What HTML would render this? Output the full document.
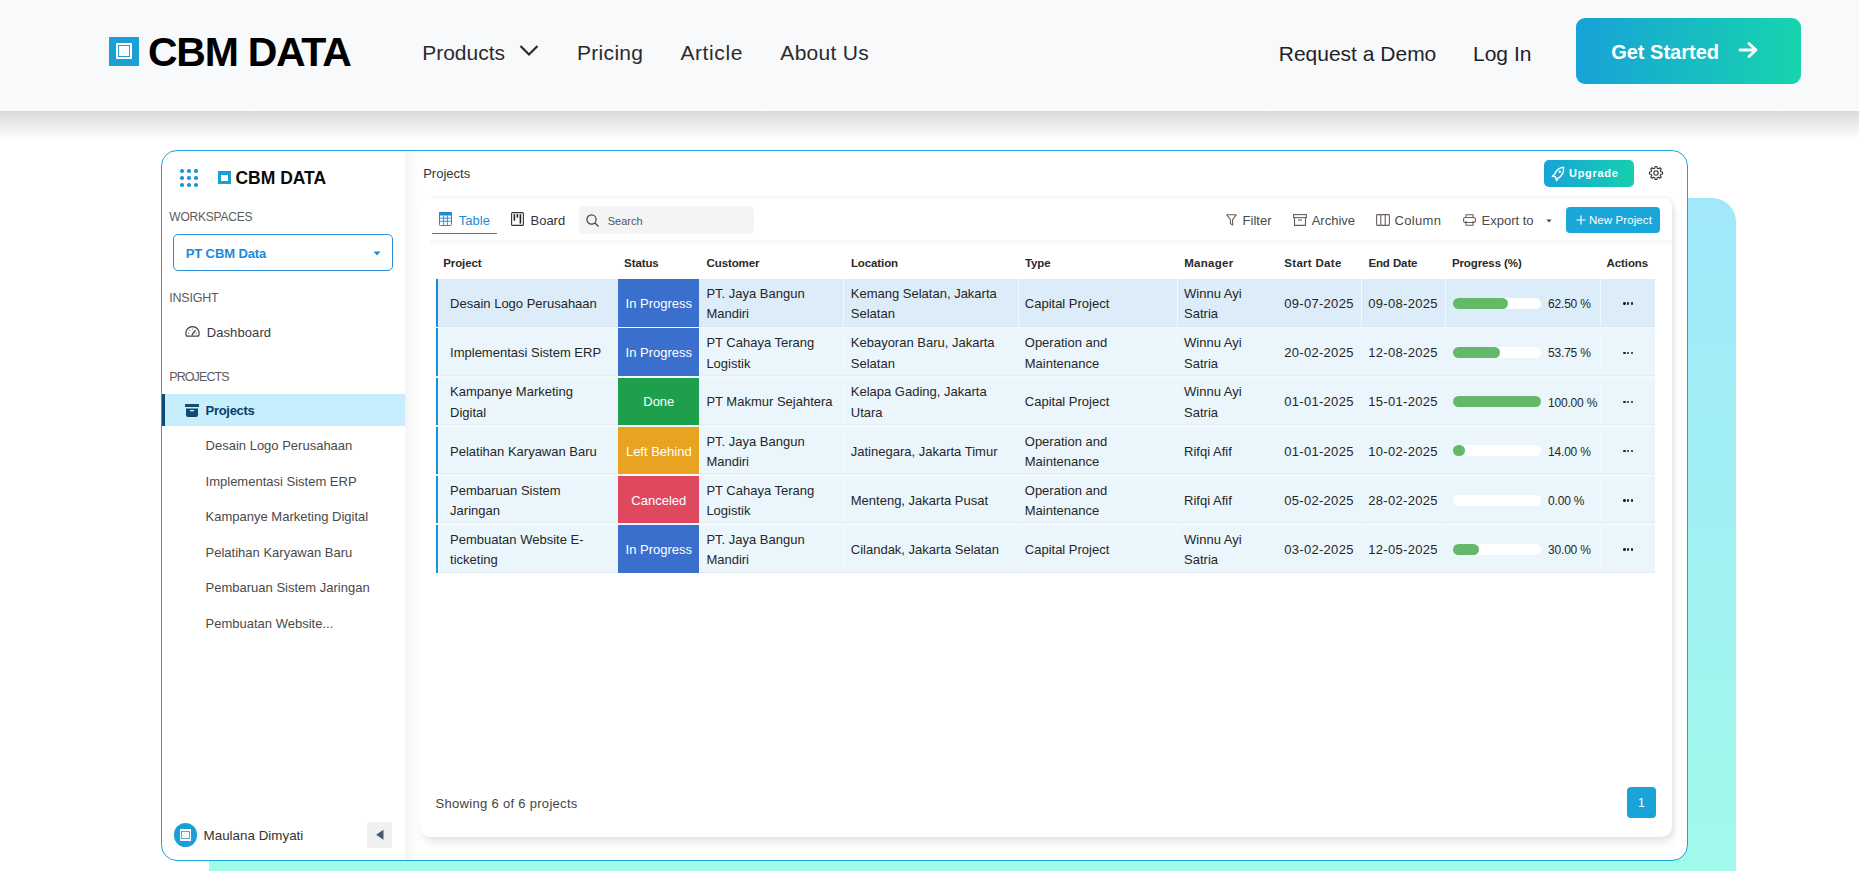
<!DOCTYPE html>
<html><head><meta charset="utf-8"><title>CBM DATA</title>
<style>
html,body{margin:0;padding:0;width:1859px;height:871px;overflow:hidden;background:#fff;}
body{position:relative;font-family:"Liberation Sans",sans-serif;}
.t{position:absolute;white-space:nowrap;}
.r{position:absolute;}
</style></head><body>
<div class="r" style="left:0px;top:0px;width:1859.00px;height:110.70px;background:#f8f9fa;"></div>
<div class="r" style="left:0px;top:110.7px;width:1859.00px;height:29.30px;background:linear-gradient(#dadada,rgba(255,255,255,0));"></div>
<div class="r" style="left:109px;top:36.5px;width:30.00px;height:29.50px;background:#1ba0d6;"></div>
<div class="r" style="left:116px;top:43px;width:16.00px;height:16.00px;background:#fff;"></div>
<div class="r" style="left:118px;top:45px;width:12.00px;height:12.00px;border:1px solid #1ba0d6;box-sizing:border-box;"></div>
<div class="t " style="left:147.95px;top:31.89px;font-size:41px;line-height:41px;font-weight:700;color:#000;letter-spacing:-1.25px;">CBM DATA</div>
<div class="t " style="left:422.13px;top:42.22px;font-size:21px;line-height:21px;font-weight:400;color:#2b2b2b;">Products</div>
<svg class="r" style="left:519px;top:44px" width="20" height="13" viewBox="0 0 20 13"><path d="M1.5 2 L10 10.5 L18.5 2" fill="none" stroke="#2b2b2b" stroke-width="2.2"/></svg>
<div class="t " style="left:577.03px;top:42.22px;font-size:21px;line-height:21px;font-weight:400;color:#2b2b2b;letter-spacing:0.3px;">Pricing</div>
<div class="t " style="left:680.43px;top:42.22px;font-size:21px;line-height:21px;font-weight:400;color:#2b2b2b;letter-spacing:0.6px;">Article</div>
<div class="t " style="left:780.33px;top:42.22px;font-size:21px;line-height:21px;font-weight:400;color:#2b2b2b;letter-spacing:0.3px;">About Us</div>
<div class="t " style="left:1278.73px;top:43.42px;font-size:21px;line-height:21px;font-weight:400;color:#1f2328;">Request a Demo</div>
<div class="t " style="left:1473.03px;top:43.42px;font-size:21px;line-height:21px;font-weight:400;color:#1f2328;">Log In</div>
<div class="r" style="left:1576px;top:18px;width:225.00px;height:65.70px;background:linear-gradient(90deg,#17a2d8,#17d4ae);border-radius:9px;"></div>
<div class="t " style="left:1611.20px;top:42.27px;font-size:20px;line-height:20px;font-weight:700;color:#fff;">Get Started</div>
<svg class="r" style="left:1738px;top:41px" width="22" height="18" viewBox="0 0 22 18"><path d="M2 9 H18 M11 2.5 L18 9 L11 15.5" fill="none" stroke="#fff" stroke-width="2.8" stroke-linecap="round" stroke-linejoin="round"/></svg>
<div class="r" style="left:208.5px;top:198px;width:1527.50px;height:702.00px;background:linear-gradient(#a1e8fc,#a0fbe9);border-radius:24px;"></div>
<div class="r" style="left:161px;top:150px;width:1527.00px;height:711.00px;background:#fff;border:1px solid #1aa3d6;border-radius:16px;box-sizing:border-box;overflow:hidden;"></div>
<div class="r" style="left:405px;top:151px;width:14.00px;height:709.00px;background:linear-gradient(90deg,#f4f4f4,rgba(255,255,255,0));"></div>
<div class="r" style="left:179.80px;top:168.70px;width:4.6px;height:4.6px;border-radius:1.8px;background:#1a95dc"></div>
<div class="r" style="left:179.80px;top:175.60px;width:4.6px;height:4.6px;border-radius:1.8px;background:#1a95dc"></div>
<div class="r" style="left:179.80px;top:182.50px;width:4.6px;height:4.6px;border-radius:1.8px;background:#1a95dc"></div>
<div class="r" style="left:186.70px;top:168.70px;width:4.6px;height:4.6px;border-radius:1.8px;background:#1a95dc"></div>
<div class="r" style="left:186.70px;top:175.60px;width:4.6px;height:4.6px;border-radius:1.8px;background:#1a95dc"></div>
<div class="r" style="left:186.70px;top:182.50px;width:4.6px;height:4.6px;border-radius:1.8px;background:#1a95dc"></div>
<div class="r" style="left:193.60px;top:168.70px;width:4.6px;height:4.6px;border-radius:1.8px;background:#1a95dc"></div>
<div class="r" style="left:193.60px;top:175.60px;width:4.6px;height:4.6px;border-radius:1.8px;background:#1a95dc"></div>
<div class="r" style="left:193.60px;top:182.50px;width:4.6px;height:4.6px;border-radius:1.8px;background:#1a95dc"></div>
<div class="r" style="left:217.5px;top:171px;width:13.50px;height:13.30px;background:#1a9fd8;"></div>
<div class="r" style="left:221px;top:174.6px;width:6.60px;height:6.40px;background:#fff;"></div>
<div class="t " style="left:235.43px;top:170.19px;font-size:17.5px;line-height:17.5px;font-weight:700;color:#0a0a0a;letter-spacing:0px;">CBM DATA</div>
<div class="t " style="left:169.26px;top:210.84px;font-size:12px;line-height:12px;font-weight:400;color:#5c5c5c;letter-spacing:-0.2px;">WORKSPACES</div>
<div class="r" style="left:173.4px;top:234.4px;width:219.40px;height:37.00px;border:1px solid #2b90d9;border-radius:5px;box-sizing:border-box;"></div>
<div class="t " style="left:185.69px;top:247.00px;font-size:13px;line-height:13px;font-weight:700;color:#1d8ad6;letter-spacing:-0.1px;">PT CBM Data</div>
<svg class="r" style="left:373px;top:251px" width="8" height="5" viewBox="0 0 8 5"><path d="M0.5 0.5 H7.5 L4 4.5 Z" fill="#1d8ad6"/></svg>
<div class="t " style="left:169.22px;top:291.52px;font-size:12.5px;line-height:12.5px;font-weight:400;color:#5c5c5c;letter-spacing:-0.2px;">INSIGHT</div>
<svg class="r" style="left:184.5px;top:325.5px" width="15" height="11" viewBox="0 0 15 11"><path d="M1.6 10.2 A6.6 6.6 0 1 1 13.4 10.2 Z" fill="none" stroke="#444" stroke-width="1.2" stroke-linejoin="round"/><path d="M7.2 8.6 L10.2 4.6" stroke="#444" stroke-width="1.5" stroke-linecap="round"/><circle cx="3.6" cy="7.2" r="0.6" fill="#666"/><circle cx="4.8" cy="4.3" r="0.6" fill="#666"/><circle cx="7.5" cy="3" r="0.6" fill="#666"/><circle cx="11.4" cy="7.2" r="0.6" fill="#666"/></svg>
<div class="t " style="left:206.69px;top:325.80px;font-size:13px;line-height:13px;font-weight:400;color:#3a3a3a;letter-spacing:0.1px;">Dashboard</div>
<div class="t " style="left:169.22px;top:370.72px;font-size:12.5px;line-height:12.5px;font-weight:400;color:#5c5c5c;letter-spacing:-0.9px;">PROJECTS</div>
<div class="r" style="left:161.7px;top:394px;width:243.30px;height:31.70px;background:#c6eefc;"></div>
<div class="r" style="left:161.7px;top:394px;width:3.50px;height:31.70px;background:#0c4c78;"></div>
<svg class="r" style="left:185px;top:403.5px" width="14" height="13" viewBox="0 0 14 13"><rect x="0" y="0" width="14" height="3" rx="0.5" fill="#0f4a73"/><path d="M1 4.5 H13 V11 A2 2 0 0 1 11 13 H3 A2 2 0 0 1 1 11 Z" fill="#0f4a73"/><rect x="5" y="6" width="4" height="1.3" fill="#c6eefc"/></svg>
<div class="t " style="left:205.59px;top:404.40px;font-size:13px;line-height:13px;font-weight:700;color:#0d3d6b;letter-spacing:-0.3px;">Projects</div>
<div class="t " style="left:205.59px;top:439.10px;font-size:13px;line-height:13px;font-weight:400;color:#4a4a4a;">Desain Logo Perusahaan</div>
<div class="t " style="left:205.59px;top:474.60px;font-size:13px;line-height:13px;font-weight:400;color:#4a4a4a;">Implementasi Sistem ERP</div>
<div class="t " style="left:205.59px;top:510.10px;font-size:13px;line-height:13px;font-weight:400;color:#4a4a4a;">Kampanye Marketing Digital</div>
<div class="t " style="left:205.59px;top:545.60px;font-size:13px;line-height:13px;font-weight:400;color:#4a4a4a;">Pelatihan Karyawan Baru</div>
<div class="t " style="left:205.59px;top:581.10px;font-size:13px;line-height:13px;font-weight:400;color:#4a4a4a;">Pembaruan Sistem Jaringan</div>
<div class="t " style="left:205.59px;top:616.60px;font-size:13px;line-height:13px;font-weight:400;color:#4a4a4a;">Pembuatan Website...</div>
<div class="r" style="left:173.6px;top:823px;width:23.70px;height:23.50px;background:#1a9fd6;border-radius:50%;"></div>
<div class="r" style="left:179.6px;top:829.4px;width:11.60px;height:11.40px;background:#fff;"></div>
<div class="r" style="left:181.2px;top:831px;width:8.40px;height:8.20px;border:1px solid #5aa8e0;box-sizing:border-box;background:#f4faff;"></div>
<div class="t " style="left:203.56px;top:829.16px;font-size:13.4px;line-height:13.4px;font-weight:400;color:#333;">Maulana Dimyati</div>
<div class="r" style="left:366.7px;top:822px;width:25.30px;height:26.00px;background:#f0f0f0;border-radius:2px;"></div>
<svg class="r" style="left:375px;top:829px" width="10" height="12" viewBox="0 0 10 12"><path d="M8.5 0.8 V10.8 L1.2 5.8 Z" fill="#4a5866"/></svg>
<div class="t " style="left:423.19px;top:167.20px;font-size:13px;line-height:13px;font-weight:400;color:#333;">Projects</div>
<div class="r" style="left:1544px;top:160px;width:90.00px;height:27.00px;background:linear-gradient(90deg,#15a4d8,#17cfae);border-radius:5px;"></div>
<svg class="r" style="left:1551px;top:166px" width="14" height="16" viewBox="0 0 14 16"><path d="M12.5 1.2 C8 1.5 5 4.5 3.5 8.5 L1.2 10.2 L4.5 10.7 L5.5 14.6 L7.3 12 C11 10 13 6.5 12.5 1.2 Z" fill="none" stroke="#fff" stroke-width="1.4" stroke-linejoin="round"/><circle cx="8.8" cy="5.8" r="1.2" fill="#fff"/></svg>
<div class="t " style="left:1569.03px;top:168.39px;font-size:11px;line-height:11px;font-weight:700;color:#fff;letter-spacing:0.7px;">Upgrade</div>
<svg class="r" style="left:1648px;top:165px" width="16" height="16" viewBox="0 0 16 16"><path d="M12.86 6.83 L14.53 7.07 L14.53 8.93 L12.86 9.17 L12.26 10.61 L13.28 11.96 L11.96 13.28 L10.61 12.26 L9.17 12.86 L8.93 14.53 L7.07 14.53 L6.83 12.86 L5.39 12.26 L4.04 13.28 L2.72 11.96 L3.74 10.61 L3.14 9.17 L1.47 8.93 L1.47 7.07 L3.14 6.83 L3.74 5.39 L2.72 4.04 L4.04 2.72 L5.39 3.74 L6.83 3.14 L7.07 1.47 L8.93 1.47 L9.17 3.14 L10.61 3.74 L11.96 2.72 L13.28 4.04 L12.26 5.39 Z" fill="none" stroke="#333" stroke-width="1.1" stroke-linejoin="round"/><circle cx="8" cy="8" r="2.2" fill="none" stroke="#333" stroke-width="1.1"/></svg>
<div class="r" style="left:420px;top:197px;width:1251.50px;height:640.00px;background:#fff;border-radius:10px;box-shadow:2px 6px 8px -1px rgba(0,0,0,0.10), 3px 0 5px rgba(0,0,0,0.04);"></div>
<div class="r" style="left:432px;top:197px;width:1239.50px;height:1.20px;background:#f3f4f5;"></div>
<div class="r" style="left:430px;top:240px;width:1241.50px;height:6.00px;background:linear-gradient(rgba(0,0,0,0.035),rgba(0,0,0,0));"></div>
<svg class="r" style="left:439px;top:212px" width="13" height="14" viewBox="0 0 13 14"><rect x="0.5" y="0.5" width="12" height="13" rx="0.8" fill="none" stroke="#1f8ad6" stroke-width="1"/><rect x="0" y="0" width="13" height="3.4" rx="0.8" fill="#1f8ad6"/><path d="M0.5 6.2 H12.5 M0.5 9.2 H12.5 M4.6 3.4 V13.5 M8.4 3.4 V13.5" stroke="#1f8ad6" stroke-width="0.9"/></svg>
<div class="t " style="left:458.79px;top:213.80px;font-size:13px;line-height:13px;font-weight:400;color:#1f8ad6;">Table</div>
<div class="r" style="left:432px;top:232.6px;width:64.50px;height:1.80px;background:#1f84d0;"></div>
<svg class="r" style="left:510.5px;top:212px" width="13" height="14" viewBox="0 0 13 14"><rect x="0.6" y="0.6" width="11.8" height="12.8" rx="1" fill="none" stroke="#333" stroke-width="1.1"/><rect x="2.6" y="2.2" width="1.6" height="6.4" fill="#222"/><rect x="5.6" y="2.2" width="1.6" height="3.4" fill="#222"/><rect x="8.6" y="2.2" width="1.6" height="9.4" fill="#222"/></svg>
<div class="t " style="left:530.49px;top:213.80px;font-size:13px;line-height:13px;font-weight:400;color:#333;">Board</div>
<div class="r" style="left:579px;top:206.2px;width:174.60px;height:27.60px;background:#f3f4f6;border-radius:5px;"></div>
<svg class="r" style="left:586px;top:214px" width="14" height="13" viewBox="0 0 14 13"><circle cx="5.5" cy="5.5" r="4.6" fill="none" stroke="#444" stroke-width="1.2"/><path d="M9 9 L12.5 12.5" stroke="#444" stroke-width="1.3"/></svg>
<div class="t " style="left:607.73px;top:216.39px;font-size:11px;line-height:11px;font-weight:400;color:#555;">Search</div>
<svg class="r" style="left:1225.5px;top:213.5px" width="11" height="12" viewBox="0 0 11 12"><path d="M0.8 0.8 H10.2 L6.6 5.6 V11 L4.4 9.6 V5.6 Z" fill="none" stroke="#6a5e5e" stroke-width="1.1" stroke-linejoin="round"/></svg>
<div class="t " style="left:1242.59px;top:213.90px;font-size:13px;line-height:13px;font-weight:400;color:#4a4a4a;">Filter</div>
<svg class="r" style="left:1292.5px;top:213.5px" width="14" height="12" viewBox="0 0 14 12"><rect x="0.6" y="0.6" width="12.8" height="3" fill="none" stroke="#6a5e5e" stroke-width="1.1"/><path d="M1.5 3.6 V11.4 H12.5 V3.6" fill="none" stroke="#6a5e5e" stroke-width="1.1"/><path d="M5 6 H9" stroke="#6a5e5e" stroke-width="1.1"/></svg>
<div class="t " style="left:1311.69px;top:213.90px;font-size:13px;line-height:13px;font-weight:400;color:#4a4a4a;">Archive</div>
<svg class="r" style="left:1375.5px;top:213.5px" width="14" height="12" viewBox="0 0 14 12"><rect x="0.6" y="0.6" width="12.8" height="10.8" rx="0.8" fill="none" stroke="#6a5e5e" stroke-width="1.1"/><path d="M4.8 0.6 V11.4 M9.2 0.6 V11.4" stroke="#6a5e5e" stroke-width="1.1"/></svg>
<div class="t " style="left:1394.59px;top:213.90px;font-size:13px;line-height:13px;font-weight:400;color:#4a4a4a;letter-spacing:0.3px;">Column</div>
<svg class="r" style="left:1463px;top:213.5px" width="13" height="12" viewBox="0 0 13 12"><path d="M3 3.5 V0.8 H10 V3.5" fill="none" stroke="#6a5e5e" stroke-width="1.1"/><rect x="0.6" y="3.5" width="11.8" height="5" rx="1.5" fill="none" stroke="#6a5e5e" stroke-width="1.1"/><path d="M3 7 V11.2 H10 V7" fill="none" stroke="#6a5e5e" stroke-width="1.1"/></svg>
<div class="t " style="left:1481.59px;top:213.90px;font-size:13px;line-height:13px;font-weight:400;color:#4a4a4a;">Export to</div>
<svg class="r" style="left:1546px;top:218.5px" width="6" height="4" viewBox="0 0 6 4"><path d="M0.5 0.5 H5.5 L3 3.5 Z" fill="#444"/></svg>
<div class="r" style="left:1566.2px;top:207px;width:93.50px;height:25.70px;background:#1aa6d9;border-radius:4px;"></div>
<svg class="r" style="left:1575.5px;top:215px" width="10" height="10" viewBox="0 0 10 10"><path d="M5 0.5 V9.5 M0.5 5 H9.5" stroke="#fff" stroke-width="1.2"/></svg>
<div class="t " style="left:1588.89px;top:214.87px;font-size:11.5px;line-height:11.5px;font-weight:400;color:#fff;letter-spacing:0.1px;">New Project</div>
<div class="t " style="left:443.19px;top:257.97px;font-size:11.5px;line-height:11.5px;font-weight:700;color:#2a2a2a;letter-spacing:-0.1px;">Project</div>
<div class="t " style="left:624.10px;top:257.97px;font-size:11.5px;line-height:11.5px;font-weight:700;color:#2a2a2a;letter-spacing:-0.1px;">Status</div>
<div class="t " style="left:706.50px;top:257.97px;font-size:11.5px;line-height:11.5px;font-weight:700;color:#2a2a2a;letter-spacing:-0.1px;">Customer</div>
<div class="t " style="left:850.90px;top:257.97px;font-size:11.5px;line-height:11.5px;font-weight:700;color:#2a2a2a;letter-spacing:-0.1px;">Location</div>
<div class="t " style="left:1024.89px;top:257.97px;font-size:11.5px;line-height:11.5px;font-weight:700;color:#2a2a2a;letter-spacing:-0.1px;">Type</div>
<div class="t " style="left:1184.19px;top:257.97px;font-size:11.5px;line-height:11.5px;font-weight:700;color:#2a2a2a;letter-spacing:0.3px;">Manager</div>
<div class="t " style="left:1284.29px;top:257.97px;font-size:11.5px;line-height:11.5px;font-weight:700;color:#2a2a2a;letter-spacing:0.3px;">Start Date</div>
<div class="t " style="left:1368.39px;top:257.97px;font-size:11.5px;line-height:11.5px;font-weight:700;color:#2a2a2a;letter-spacing:-0.1px;">End Date</div>
<div class="t " style="left:1451.89px;top:257.97px;font-size:11.5px;line-height:11.5px;font-weight:700;color:#2a2a2a;letter-spacing:-0.1px;">Progress (%)</div>
<div class="t " style="left:1606.60px;top:257.97px;font-size:11.5px;line-height:11.5px;font-weight:700;color:#2a2a2a;letter-spacing:-0.1px;">Actions</div>
<div class="r" style="left:436px;top:279.2px;width:1219.00px;height:47.50px;background:#dcecf8;"></div>
<div class="r" style="left:436px;top:325.7px;width:1219.00px;height:1.00px;background:#d6e5ee;"></div>
<div class="r" style="left:843px;top:279.2px;width:1.20px;height:46.50px;background:#f3f9fd;"></div>
<div class="r" style="left:1018px;top:279.2px;width:1.20px;height:46.50px;background:#f3f9fd;"></div>
<div class="r" style="left:1177px;top:279.2px;width:1.20px;height:46.50px;background:#f3f9fd;"></div>
<div class="r" style="left:1361px;top:279.2px;width:1.20px;height:46.50px;background:#f3f9fd;"></div>
<div class="r" style="left:1445px;top:279.2px;width:1.20px;height:46.50px;background:#f3f9fd;"></div>
<div class="r" style="left:1599.5px;top:279.2px;width:1.20px;height:46.50px;background:#f3f9fd;"></div>
<div class="r" style="left:436px;top:279.2px;width:1.50px;height:47.50px;background:#1a8fd8;"></div>
<div class="r" style="left:618.3px;top:279.2px;width:81.00px;height:47.50px;background:#3a6fcd;"></div>
<div class="t " style="left:450.09px;top:297.10px;font-size:13px;line-height:13px;font-weight:400;color:#262626;">Desain Logo Perusahaan</div>
<div class="t" style="left:618.3px;width:81px;text-align:center;top:297.10px;font-size:13px;line-height:13px;color:#fff">In Progress</div>
<div class="t " style="left:706.39px;top:287.10px;font-size:13px;line-height:13px;font-weight:400;color:#262626;">PT. Jaya Bangun</div>
<div class="t " style="left:706.39px;top:307.40px;font-size:13px;line-height:13px;font-weight:400;color:#262626;">Mandiri</div>
<div class="t " style="left:850.79px;top:287.10px;font-size:13px;line-height:13px;font-weight:400;color:#262626;">Kemang Selatan, Jakarta</div>
<div class="t " style="left:850.79px;top:307.40px;font-size:13px;line-height:13px;font-weight:400;color:#262626;">Selatan</div>
<div class="t " style="left:1024.79px;top:297.10px;font-size:13px;line-height:13px;font-weight:400;color:#262626;">Capital Project</div>
<div class="t " style="left:1184.09px;top:287.10px;font-size:13px;line-height:13px;font-weight:400;color:#262626;">Winnu Ayi</div>
<div class="t " style="left:1184.09px;top:307.40px;font-size:13px;line-height:13px;font-weight:400;color:#262626;">Satria</div>
<div class="t " style="left:1284.19px;top:297.10px;font-size:13px;line-height:13px;font-weight:400;color:#262626;letter-spacing:0.3px;">09-07-2025</div>
<div class="t " style="left:1368.29px;top:297.10px;font-size:13px;line-height:13px;font-weight:400;color:#262626;letter-spacing:0.3px;">09-08-2025</div>
<div class="r" style="left:1452.8px;top:298.0px;width:88.00px;height:11.00px;background:#fff;border-radius:6px;"></div>
<div class="r" style="left:1452.8px;top:298.0px;width:55.00px;height:11.00px;background:#63b968;border-radius:6px;"></div>
<div class="t " style="left:1548.06px;top:298.24px;font-size:12px;line-height:12px;font-weight:400;color:#262626;letter-spacing:-0.2px;">62.50 %</div>
<div class="r" style="left:1623.3px;top:302.4px;width:2.60px;height:2.60px;background:#222;border-radius:50%;"></div>
<div class="r" style="left:1626.8999999999999px;top:302.4px;width:2.60px;height:2.60px;background:#222;border-radius:50%;"></div>
<div class="r" style="left:1630.5px;top:302.4px;width:2.60px;height:2.60px;background:#222;border-radius:50%;"></div>
<div class="r" style="left:436px;top:326.7px;width:1219.00px;height:2.66px;background:#f2f9fd;"></div>
<div class="r" style="left:436px;top:329.36px;width:1219.00px;height:46.50px;background:#eaf6fc;"></div>
<div class="r" style="left:436px;top:374.86px;width:1219.00px;height:1.00px;background:#e3edf3;"></div>
<div class="r" style="left:843px;top:328.36px;width:1.20px;height:46.50px;background:#f2f9fd;"></div>
<div class="r" style="left:1018px;top:328.36px;width:1.20px;height:46.50px;background:#f2f9fd;"></div>
<div class="r" style="left:1177px;top:328.36px;width:1.20px;height:46.50px;background:#f2f9fd;"></div>
<div class="r" style="left:1361px;top:328.36px;width:1.20px;height:46.50px;background:#f2f9fd;"></div>
<div class="r" style="left:1445px;top:328.36px;width:1.20px;height:46.50px;background:#f2f9fd;"></div>
<div class="r" style="left:1599.5px;top:328.36px;width:1.20px;height:46.50px;background:#f2f9fd;"></div>
<div class="r" style="left:436px;top:328.36px;width:1.50px;height:47.50px;background:#1a8fd8;"></div>
<div class="r" style="left:618.3px;top:328.36px;width:81.00px;height:47.50px;background:#3a6fcd;"></div>
<div class="t " style="left:450.09px;top:346.26px;font-size:13px;line-height:13px;font-weight:400;color:#262626;">Implementasi Sistem ERP</div>
<div class="t" style="left:618.3px;width:81px;text-align:center;top:346.26px;font-size:13px;line-height:13px;color:#fff">In Progress</div>
<div class="t " style="left:706.39px;top:336.26px;font-size:13px;line-height:13px;font-weight:400;color:#262626;">PT Cahaya Terang</div>
<div class="t " style="left:706.39px;top:356.56px;font-size:13px;line-height:13px;font-weight:400;color:#262626;">Logistik</div>
<div class="t " style="left:850.79px;top:336.26px;font-size:13px;line-height:13px;font-weight:400;color:#262626;">Kebayoran Baru, Jakarta</div>
<div class="t " style="left:850.79px;top:356.56px;font-size:13px;line-height:13px;font-weight:400;color:#262626;">Selatan</div>
<div class="t " style="left:1024.79px;top:336.26px;font-size:13px;line-height:13px;font-weight:400;color:#262626;">Operation and</div>
<div class="t " style="left:1024.79px;top:356.56px;font-size:13px;line-height:13px;font-weight:400;color:#262626;">Maintenance</div>
<div class="t " style="left:1184.09px;top:336.26px;font-size:13px;line-height:13px;font-weight:400;color:#262626;">Winnu Ayi</div>
<div class="t " style="left:1184.09px;top:356.56px;font-size:13px;line-height:13px;font-weight:400;color:#262626;">Satria</div>
<div class="t " style="left:1284.19px;top:346.26px;font-size:13px;line-height:13px;font-weight:400;color:#262626;letter-spacing:0.3px;">20-02-2025</div>
<div class="t " style="left:1368.29px;top:346.26px;font-size:13px;line-height:13px;font-weight:400;color:#262626;letter-spacing:0.3px;">12-08-2025</div>
<div class="r" style="left:1452.8px;top:347.16px;width:88.00px;height:11.00px;background:#fff;border-radius:6px;"></div>
<div class="r" style="left:1452.8px;top:347.16px;width:47.30px;height:11.00px;background:#63b968;border-radius:6px;"></div>
<div class="t " style="left:1548.06px;top:347.40px;font-size:12px;line-height:12px;font-weight:400;color:#262626;letter-spacing:-0.2px;">53.75 %</div>
<div class="r" style="left:1623.3px;top:351.56px;width:2.60px;height:2.60px;background:#222;border-radius:50%;"></div>
<div class="r" style="left:1626.8999999999999px;top:351.56px;width:2.60px;height:2.60px;background:#222;border-radius:50%;"></div>
<div class="r" style="left:1630.5px;top:351.56px;width:2.60px;height:2.60px;background:#222;border-radius:50%;"></div>
<div class="r" style="left:436px;top:375.85999999999996px;width:1219.00px;height:2.66px;background:#f2f9fd;"></div>
<div class="r" style="left:436px;top:378.52px;width:1219.00px;height:46.50px;background:#eaf6fc;"></div>
<div class="r" style="left:436px;top:424.02px;width:1219.00px;height:1.00px;background:#e3edf3;"></div>
<div class="r" style="left:843px;top:377.52px;width:1.20px;height:46.50px;background:#f2f9fd;"></div>
<div class="r" style="left:1018px;top:377.52px;width:1.20px;height:46.50px;background:#f2f9fd;"></div>
<div class="r" style="left:1177px;top:377.52px;width:1.20px;height:46.50px;background:#f2f9fd;"></div>
<div class="r" style="left:1361px;top:377.52px;width:1.20px;height:46.50px;background:#f2f9fd;"></div>
<div class="r" style="left:1445px;top:377.52px;width:1.20px;height:46.50px;background:#f2f9fd;"></div>
<div class="r" style="left:1599.5px;top:377.52px;width:1.20px;height:46.50px;background:#f2f9fd;"></div>
<div class="r" style="left:436px;top:377.52px;width:1.50px;height:47.50px;background:#1a8fd8;"></div>
<div class="r" style="left:618.3px;top:377.52px;width:81.00px;height:47.50px;background:#1e9f4b;"></div>
<div class="t " style="left:450.09px;top:385.42px;font-size:13px;line-height:13px;font-weight:400;color:#262626;">Kampanye Marketing</div>
<div class="t " style="left:450.09px;top:405.72px;font-size:13px;line-height:13px;font-weight:400;color:#262626;">Digital</div>
<div class="t" style="left:618.3px;width:81px;text-align:center;top:395.42px;font-size:13px;line-height:13px;color:#fff">Done</div>
<div class="t " style="left:706.39px;top:395.42px;font-size:13px;line-height:13px;font-weight:400;color:#262626;">PT Makmur Sejahtera</div>
<div class="t " style="left:850.79px;top:385.42px;font-size:13px;line-height:13px;font-weight:400;color:#262626;">Kelapa Gading, Jakarta</div>
<div class="t " style="left:850.79px;top:405.72px;font-size:13px;line-height:13px;font-weight:400;color:#262626;">Utara</div>
<div class="t " style="left:1024.79px;top:395.42px;font-size:13px;line-height:13px;font-weight:400;color:#262626;">Capital Project</div>
<div class="t " style="left:1184.09px;top:385.42px;font-size:13px;line-height:13px;font-weight:400;color:#262626;">Winnu Ayi</div>
<div class="t " style="left:1184.09px;top:405.72px;font-size:13px;line-height:13px;font-weight:400;color:#262626;">Satria</div>
<div class="t " style="left:1284.19px;top:395.42px;font-size:13px;line-height:13px;font-weight:400;color:#262626;letter-spacing:0.3px;">01-01-2025</div>
<div class="t " style="left:1368.29px;top:395.42px;font-size:13px;line-height:13px;font-weight:400;color:#262626;letter-spacing:0.3px;">15-01-2025</div>
<div class="r" style="left:1452.8px;top:396.32px;width:88.00px;height:11.00px;background:#fff;border-radius:6px;"></div>
<div class="r" style="left:1452.8px;top:396.32px;width:88.00px;height:11.00px;background:#63b968;border-radius:6px;"></div>
<div class="t " style="left:1548.06px;top:396.56px;font-size:12px;line-height:12px;font-weight:400;color:#262626;letter-spacing:-0.2px;">100.00 %</div>
<div class="r" style="left:1623.3px;top:400.71999999999997px;width:2.60px;height:2.60px;background:#222;border-radius:50%;"></div>
<div class="r" style="left:1626.8999999999999px;top:400.71999999999997px;width:2.60px;height:2.60px;background:#222;border-radius:50%;"></div>
<div class="r" style="left:1630.5px;top:400.71999999999997px;width:2.60px;height:2.60px;background:#222;border-radius:50%;"></div>
<div class="r" style="left:436px;top:425.0199999999999px;width:1219.00px;height:2.66px;background:#f2f9fd;"></div>
<div class="r" style="left:436px;top:427.67999999999995px;width:1219.00px;height:46.50px;background:#eaf6fc;"></div>
<div class="r" style="left:436px;top:473.17999999999995px;width:1219.00px;height:1.00px;background:#e3edf3;"></div>
<div class="r" style="left:843px;top:426.67999999999995px;width:1.20px;height:46.50px;background:#f2f9fd;"></div>
<div class="r" style="left:1018px;top:426.67999999999995px;width:1.20px;height:46.50px;background:#f2f9fd;"></div>
<div class="r" style="left:1177px;top:426.67999999999995px;width:1.20px;height:46.50px;background:#f2f9fd;"></div>
<div class="r" style="left:1361px;top:426.67999999999995px;width:1.20px;height:46.50px;background:#f2f9fd;"></div>
<div class="r" style="left:1445px;top:426.67999999999995px;width:1.20px;height:46.50px;background:#f2f9fd;"></div>
<div class="r" style="left:1599.5px;top:426.67999999999995px;width:1.20px;height:46.50px;background:#f2f9fd;"></div>
<div class="r" style="left:436px;top:426.67999999999995px;width:1.50px;height:47.50px;background:#1a8fd8;"></div>
<div class="r" style="left:618.3px;top:426.67999999999995px;width:81.00px;height:47.50px;background:#e8a321;"></div>
<div class="t " style="left:450.09px;top:444.58px;font-size:13px;line-height:13px;font-weight:400;color:#262626;">Pelatihan Karyawan Baru</div>
<div class="t" style="left:618.3px;width:81px;text-align:center;top:444.58px;font-size:13px;line-height:13px;color:#fff">Left Behind</div>
<div class="t " style="left:706.39px;top:434.58px;font-size:13px;line-height:13px;font-weight:400;color:#262626;">PT. Jaya Bangun</div>
<div class="t " style="left:706.39px;top:454.88px;font-size:13px;line-height:13px;font-weight:400;color:#262626;">Mandiri</div>
<div class="t " style="left:850.79px;top:444.58px;font-size:13px;line-height:13px;font-weight:400;color:#262626;">Jatinegara, Jakarta Timur</div>
<div class="t " style="left:1024.79px;top:434.58px;font-size:13px;line-height:13px;font-weight:400;color:#262626;">Operation and</div>
<div class="t " style="left:1024.79px;top:454.88px;font-size:13px;line-height:13px;font-weight:400;color:#262626;">Maintenance</div>
<div class="t " style="left:1184.09px;top:444.58px;font-size:13px;line-height:13px;font-weight:400;color:#262626;">Rifqi Afif</div>
<div class="t " style="left:1284.19px;top:444.58px;font-size:13px;line-height:13px;font-weight:400;color:#262626;letter-spacing:0.3px;">01-01-2025</div>
<div class="t " style="left:1368.29px;top:444.58px;font-size:13px;line-height:13px;font-weight:400;color:#262626;letter-spacing:0.3px;">10-02-2025</div>
<div class="r" style="left:1452.8px;top:445.47999999999996px;width:88.00px;height:11.00px;background:#fff;border-radius:6px;"></div>
<div class="r" style="left:1452.8px;top:445.47999999999996px;width:12.32px;height:11.00px;background:#63b968;border-radius:6px;"></div>
<div class="t " style="left:1548.06px;top:445.72px;font-size:12px;line-height:12px;font-weight:400;color:#262626;letter-spacing:-0.2px;">14.00 %</div>
<div class="r" style="left:1623.3px;top:449.87999999999994px;width:2.60px;height:2.60px;background:#222;border-radius:50%;"></div>
<div class="r" style="left:1626.8999999999999px;top:449.87999999999994px;width:2.60px;height:2.60px;background:#222;border-radius:50%;"></div>
<div class="r" style="left:1630.5px;top:449.87999999999994px;width:2.60px;height:2.60px;background:#222;border-radius:50%;"></div>
<div class="r" style="left:436px;top:474.17999999999995px;width:1219.00px;height:2.66px;background:#f2f9fd;"></div>
<div class="r" style="left:436px;top:476.84px;width:1219.00px;height:46.50px;background:#eaf6fc;"></div>
<div class="r" style="left:436px;top:522.3399999999999px;width:1219.00px;height:1.00px;background:#e3edf3;"></div>
<div class="r" style="left:843px;top:475.84px;width:1.20px;height:46.50px;background:#f2f9fd;"></div>
<div class="r" style="left:1018px;top:475.84px;width:1.20px;height:46.50px;background:#f2f9fd;"></div>
<div class="r" style="left:1177px;top:475.84px;width:1.20px;height:46.50px;background:#f2f9fd;"></div>
<div class="r" style="left:1361px;top:475.84px;width:1.20px;height:46.50px;background:#f2f9fd;"></div>
<div class="r" style="left:1445px;top:475.84px;width:1.20px;height:46.50px;background:#f2f9fd;"></div>
<div class="r" style="left:1599.5px;top:475.84px;width:1.20px;height:46.50px;background:#f2f9fd;"></div>
<div class="r" style="left:436px;top:475.84px;width:1.50px;height:47.50px;background:#1a8fd8;"></div>
<div class="r" style="left:618.3px;top:475.84px;width:81.00px;height:47.50px;background:#e0485f;"></div>
<div class="t " style="left:450.09px;top:483.74px;font-size:13px;line-height:13px;font-weight:400;color:#262626;">Pembaruan Sistem</div>
<div class="t " style="left:450.09px;top:504.04px;font-size:13px;line-height:13px;font-weight:400;color:#262626;">Jaringan</div>
<div class="t" style="left:618.3px;width:81px;text-align:center;top:493.74px;font-size:13px;line-height:13px;color:#fff">Canceled</div>
<div class="t " style="left:706.39px;top:483.74px;font-size:13px;line-height:13px;font-weight:400;color:#262626;">PT Cahaya Terang</div>
<div class="t " style="left:706.39px;top:504.04px;font-size:13px;line-height:13px;font-weight:400;color:#262626;">Logistik</div>
<div class="t " style="left:850.79px;top:493.74px;font-size:13px;line-height:13px;font-weight:400;color:#262626;">Menteng, Jakarta Pusat</div>
<div class="t " style="left:1024.79px;top:483.74px;font-size:13px;line-height:13px;font-weight:400;color:#262626;">Operation and</div>
<div class="t " style="left:1024.79px;top:504.04px;font-size:13px;line-height:13px;font-weight:400;color:#262626;">Maintenance</div>
<div class="t " style="left:1184.09px;top:493.74px;font-size:13px;line-height:13px;font-weight:400;color:#262626;">Rifqi Afif</div>
<div class="t " style="left:1284.19px;top:493.74px;font-size:13px;line-height:13px;font-weight:400;color:#262626;letter-spacing:0.3px;">05-02-2025</div>
<div class="t " style="left:1368.29px;top:493.74px;font-size:13px;line-height:13px;font-weight:400;color:#262626;letter-spacing:0.3px;">28-02-2025</div>
<div class="r" style="left:1452.8px;top:494.64px;width:88.00px;height:11.00px;background:#fff;border-radius:6px;"></div>
<div class="t " style="left:1548.06px;top:494.88px;font-size:12px;line-height:12px;font-weight:400;color:#262626;letter-spacing:-0.2px;">0.00 %</div>
<div class="r" style="left:1623.3px;top:499.03999999999996px;width:2.60px;height:2.60px;background:#222;border-radius:50%;"></div>
<div class="r" style="left:1626.8999999999999px;top:499.03999999999996px;width:2.60px;height:2.60px;background:#222;border-radius:50%;"></div>
<div class="r" style="left:1630.5px;top:499.03999999999996px;width:2.60px;height:2.60px;background:#222;border-radius:50%;"></div>
<div class="r" style="left:436px;top:523.34px;width:1219.00px;height:2.66px;background:#f2f9fd;"></div>
<div class="r" style="left:436px;top:526.0px;width:1219.00px;height:46.50px;background:#eaf6fc;"></div>
<div class="r" style="left:436px;top:571.5px;width:1219.00px;height:1.00px;background:#e3edf3;"></div>
<div class="r" style="left:843px;top:525.0px;width:1.20px;height:46.50px;background:#f2f9fd;"></div>
<div class="r" style="left:1018px;top:525.0px;width:1.20px;height:46.50px;background:#f2f9fd;"></div>
<div class="r" style="left:1177px;top:525.0px;width:1.20px;height:46.50px;background:#f2f9fd;"></div>
<div class="r" style="left:1361px;top:525.0px;width:1.20px;height:46.50px;background:#f2f9fd;"></div>
<div class="r" style="left:1445px;top:525.0px;width:1.20px;height:46.50px;background:#f2f9fd;"></div>
<div class="r" style="left:1599.5px;top:525.0px;width:1.20px;height:46.50px;background:#f2f9fd;"></div>
<div class="r" style="left:436px;top:525.0px;width:1.50px;height:47.50px;background:#1a8fd8;"></div>
<div class="r" style="left:618.3px;top:525.0px;width:81.00px;height:47.50px;background:#3a6fcd;"></div>
<div class="t " style="left:450.09px;top:532.90px;font-size:13px;line-height:13px;font-weight:400;color:#262626;">Pembuatan Website E-</div>
<div class="t " style="left:450.09px;top:553.20px;font-size:13px;line-height:13px;font-weight:400;color:#262626;">ticketing</div>
<div class="t" style="left:618.3px;width:81px;text-align:center;top:542.90px;font-size:13px;line-height:13px;color:#fff">In Progress</div>
<div class="t " style="left:706.39px;top:532.90px;font-size:13px;line-height:13px;font-weight:400;color:#262626;">PT. Jaya Bangun</div>
<div class="t " style="left:706.39px;top:553.20px;font-size:13px;line-height:13px;font-weight:400;color:#262626;">Mandiri</div>
<div class="t " style="left:850.79px;top:542.90px;font-size:13px;line-height:13px;font-weight:400;color:#262626;">Cilandak, Jakarta Selatan</div>
<div class="t " style="left:1024.79px;top:542.90px;font-size:13px;line-height:13px;font-weight:400;color:#262626;">Capital Project</div>
<div class="t " style="left:1184.09px;top:532.90px;font-size:13px;line-height:13px;font-weight:400;color:#262626;">Winnu Ayi</div>
<div class="t " style="left:1184.09px;top:553.20px;font-size:13px;line-height:13px;font-weight:400;color:#262626;">Satria</div>
<div class="t " style="left:1284.19px;top:542.90px;font-size:13px;line-height:13px;font-weight:400;color:#262626;letter-spacing:0.3px;">03-02-2025</div>
<div class="t " style="left:1368.29px;top:542.90px;font-size:13px;line-height:13px;font-weight:400;color:#262626;letter-spacing:0.3px;">12-05-2025</div>
<div class="r" style="left:1452.8px;top:543.8px;width:88.00px;height:11.00px;background:#fff;border-radius:6px;"></div>
<div class="r" style="left:1452.8px;top:543.8px;width:26.40px;height:11.00px;background:#63b968;border-radius:6px;"></div>
<div class="t " style="left:1548.06px;top:544.04px;font-size:12px;line-height:12px;font-weight:400;color:#262626;letter-spacing:-0.2px;">30.00 %</div>
<div class="r" style="left:1623.3px;top:548.2px;width:2.60px;height:2.60px;background:#222;border-radius:50%;"></div>
<div class="r" style="left:1626.8999999999999px;top:548.2px;width:2.60px;height:2.60px;background:#222;border-radius:50%;"></div>
<div class="r" style="left:1630.5px;top:548.2px;width:2.60px;height:2.60px;background:#222;border-radius:50%;"></div>
<div class="t " style="left:435.59px;top:796.70px;font-size:13px;line-height:13px;font-weight:400;color:#444;letter-spacing:0.3px;">Showing 6 of 6 projects</div>
<div class="r" style="left:1626.7px;top:786.8px;width:29.20px;height:31.00px;background:#1aa3d6;border-radius:4px;"></div>
<div class="t" style="left:1626.7px;width:29.2px;text-align:center;top:797.14px;font-size:12px;line-height:12px;color:#fff">1</div>
</body></html>
